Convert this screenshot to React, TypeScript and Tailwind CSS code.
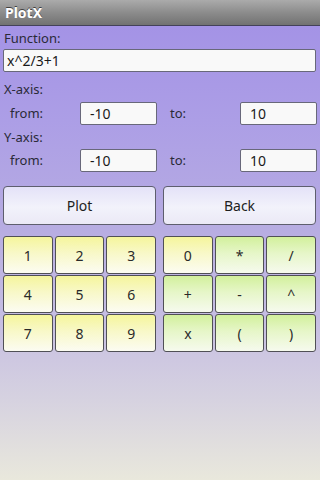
const KEYS_LEFT = ["1", "2", "3", "4", "5", "6", "7", "8", "9"];
const KEYS_RIGHT = ["0", "*", "/", "+", "-", "^", "x", "(", ")"];

const yellowKey =
  "bg-[linear-gradient(180deg,#f5f59c_0%,#f8f8c8_45%,#fcfcf2_100%)]";
const greenKey =
  "bg-[linear-gradient(180deg,#d2f09c_0%,#e6f6c8_45%,#f6faee_100%)]";

function Key({ label, green }: { label: string; green?: boolean }) {
  return (
    <button
      type="button"
      className={`flex h-[38px] items-center justify-center rounded-[3px] border-[1.5px] border-[#505056] text-[14px] text-[#2a2a2a] ${
        green ? greenKey : yellowKey
      }`}
    >
      {label}
    </button>
  );
}

function Field({ value, className = "" }: { value: string; className?: string }) {
  return (
    <div
      className={`flex items-center rounded-[2px] border border-[#68687a] bg-[#f9f9f9] px-[9px] text-[14px] text-[#1a1a1a] ${className}`}
    >
      {value}
    </div>
  );
}

function RangeRow({ from, to }: { from: string; to: string }) {
  return (
    <div className="flex h-[23px] items-center text-[13px] text-[#2a2a38]">
      <span className="w-[77px] pl-[7px]">from:</span>
      <Field value={from} className="h-full w-[77px]" />
      <span className="w-[83px] pl-[13px]">to:</span>
      <Field value={to} className="h-full w-[77px]" />
    </div>
  );
}

export default function App() {
  return (
    <div
      className="flex h-[480px] w-[320px] flex-col overflow-hidden bg-[linear-gradient(180deg,#a493e6_26px,#ac9ee6_120px,#b6abe2_220px,#c6bee2_320px,#d6d2e0_400px,#e9e8dc_480px)]"
      style={{ fontFamily: '"Noto Sans", "Open Sans", sans-serif' }}
    >
      <div className="flex h-[26px] shrink-0 items-center border-b border-[#44425a] bg-[linear-gradient(180deg,#ababab,#8c8c8c_50%,#727272)] px-[5px] text-[14px] font-bold text-white [text-shadow:0_-1px_0_#404040]">
        PlotX
      </div>

      <div className="flex flex-col px-[3px]">
        <div className="h-[23px] pl-[1px] text-[13px] leading-[24px] text-[#2a2a38]">
          Function:
        </div>
        <Field value="x^2/3+1" className="h-[23px] w-[313px] pl-[3px]" />

        <div className="mt-[6px] h-[24px] pl-[1px] text-[13px] leading-[22px] text-[#2a2a38]">
          X-axis:
        </div>
        <RangeRow from="-10" to="10" />

        <div className="h-[24px] pl-[1px] text-[13px] leading-[24px] text-[#2a2a38]">
          Y-axis:
        </div>
        <RangeRow from="-10" to="10" />

        <div className="mt-[14px] grid grid-cols-2 gap-[7px] pr-[1px]">
          {["Plot", "Back"].map((label) => (
            <button
              key={label}
              type="button"
              className="flex h-[39px] items-center justify-center rounded-[4px] border-[1.5px] border-[#5e5e6e] bg-[linear-gradient(180deg,#e4e2f8_0%,#f2f2fb_55%,#ebe9f6_100%)] text-[14px] text-[#1e1e1e]"
            >
              {label}
            </button>
          ))}
        </div>

        <div className="mt-[11px] grid grid-cols-2 gap-[7px] pr-[1px]">
          <div className="grid grid-cols-3 gap-x-[2px] gap-y-[1px]">
            {KEYS_LEFT.map((k) => (
              <Key key={k} label={k} />
            ))}
          </div>
          <div className="grid grid-cols-3 gap-x-[2px] gap-y-[1px]">
            {KEYS_RIGHT.map((k) => (
              <Key key={k} label={k} green={k !== "0"} />
            ))}
          </div>
        </div>
      </div>
    </div>
  );
}
